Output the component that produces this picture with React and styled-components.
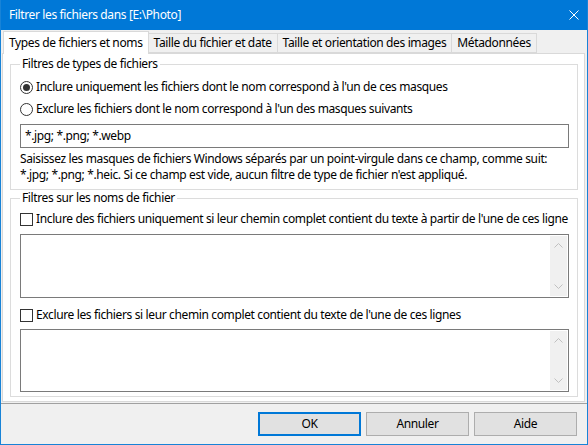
import styled, { createGlobalStyle } from 'styled-components';

const GlobalStyle = createGlobalStyle`
  html, body {
    margin: 0;
    padding: 0;
    background: #f0f0f0;
  }
  body {
    font-family: "Noto Sans", "Liberation Sans", sans-serif;
    font-size: 12px;
    letter-spacing: -0.37px;
    color: #000;
  }
`;

const Window = styled.div`
  width: 588px;
  height: 445px;
  box-sizing: border-box;
  border: 1px solid #1883d7;
  border-top: none;
  background: #f0f0f0;
  display: flex;
  flex-direction: column;
  overflow: hidden;
`;

const TitleBar = styled.div`
  height: 30px;
  flex: none;
  background: #0078d7;
  color: #fff;
  display: flex;
  align-items: center;
  justify-content: space-between;
  padding: 0 8px 0 8px;
  box-sizing: border-box;
  line-height: 16px;
`;

const CloseIcon = () => (
  <svg width="10" height="10" viewBox="0 0 10 10">
    <path d="M0.5 0.5 L9.5 9.5 M9.5 0.5 L0.5 9.5" stroke="#fff" strokeWidth="1" fill="none" />
  </svg>
);

const Body = styled.div`
  display: flex;
  flex-direction: column;
  padding: 0 2px 0 1px;
`;

const TabStrip = styled.div`
  display: flex;
  align-items: flex-end;
  height: 23px;
  padding-left: 1px;
  position: relative;
  z-index: 1;
`;

const Tab = styled.div`
  box-sizing: border-box;
  height: ${p => (p.$active ? '23px' : '20px')};
  padding: 0 5px;
  margin-bottom: ${p => (p.$active ? '-1px' : '0')};
  margin-left: ${p => (p.$first ? '0' : '-1px')};
  border: 1px solid #d9d9d9;
  border-bottom: ${p => (p.$active ? 'none' : '1px solid #d9d9d9')};
  background: ${p => (p.$active ? '#fff' : '#f0f0f0')};
  display: flex;
  align-items: center;
  white-space: nowrap;
  line-height: 16px;
`;

const TabPage = styled.div`
  height: 349px;
  box-sizing: border-box;
  background: #fff;
  border: 1px solid #d9d9d9;
  padding: 2px 6px 0 7px;
  display: flex;
  flex-direction: column;
`;

const Group = styled.fieldset`
  margin: 0;
  min-width: 0;
  border: 1px solid #dcdcdc;
  padding: ${p => p.$pad};
  display: flex;
  flex-direction: column;
`;

const Legend = styled.legend`
  padding: 0 2px;
  margin-left: 0;
  line-height: 16px;
  height: 16px;
`;

const OptionRow = styled.label`
  display: flex;
  align-items: center;
  gap: 3px;
  height: 16px;
  line-height: 16px;
  white-space: nowrap;
  overflow: hidden;
  margin-top: ${p => p.$mt || '0'};
`;

const Radio = styled.span`
  box-sizing: border-box;
  width: 13px;
  height: 13px;
  border-radius: 50%;
  border: 1px solid #333;
  background: #fff;
  display: flex;
  align-items: center;
  justify-content: center;
  flex: none;
  &::after {
    content: '';
    width: 7px;
    height: 7px;
    border-radius: 50%;
    background: ${p => (p.$checked ? '#333' : 'transparent')};
  }
`;

const Checkbox = styled.span`
  box-sizing: border-box;
  width: 13px;
  height: 13px;
  border: 1px solid #333;
  background: #fff;
  flex: none;
`;

const TextInput = styled.div`
  box-sizing: border-box;
  height: 24px;
  margin-top: 7px;
  border: 1px solid #7a7a7a;
  background: #fff;
  padding: 0 4px;
  display: flex;
  align-items: center;
  line-height: 16px;
`;

const Help = styled.div`
  margin-top: 3px;
  line-height: 16px;
  white-space: nowrap;
`;

const TextArea = styled.div`
  box-sizing: border-box;
  height: ${p => p.$h};
  margin-top: ${p => p.$mt};
  border: 1px solid #7a7a7a;
  background: #fff;
  padding: 1px;
  display: flex;
  justify-content: flex-end;
`;

const ScrollBar = styled.div`
  width: 17px;
  background: #f0f0f0;
  display: flex;
  flex-direction: column;
  justify-content: space-between;
  align-items: center;
  padding: 6px 0;
`;

const Chevron = ({ down }) => (
  <svg width="9" height="6" viewBox="0 0 9 6">
    <path
      d={down ? 'M0.5 0.5 L4.5 4.5 L8.5 0.5' : 'M0.5 5.5 L4.5 1.5 L8.5 5.5'}
      stroke="#c0c0c0"
      strokeWidth="1"
      fill="none"
    />
  </svg>
);

const Footer = styled.div`
  flex: 1;
  margin-top: 1px;
  border-top: 1px solid #a0a0a0;
  display: flex;
  justify-content: flex-end;
  align-items: flex-start;
  gap: 5px;
  padding: 8px 10px 0 0;
`;

const Button = styled.div`
  box-sizing: border-box;
  width: 103px;
  height: 24px;
  background: #e1e1e1;
  border: ${p => (p.$default ? '2px solid #0078d7' : '1px solid #adadad')};
  display: flex;
  align-items: center;
  justify-content: center;
  line-height: 16px;
`;

const tabs = [
  'Types de fichiers et noms',
  'Taille du fichier et date',
  'Taille et orientation des images',
  'Métadonnées',
];

export default function App() {
  return (
    <>
      <GlobalStyle />
      <Window>
        <TitleBar>
          <span>{'Filtrer les fichiers dans [E:\\Photo]'}</span>
          <CloseIcon />
        </TitleBar>
        <Body>
          <TabStrip>
            {tabs.map((t, i) => (
              <Tab key={t} $active={i === 0} $first={i === 0}>{t}</Tab>
            ))}
          </TabStrip>
          <TabPage>
            <Group $pad="7px 8px 6px 9px">
              <Legend>Filtres de types de fichiers</Legend>
              <OptionRow>
                <Radio $checked />
                Inclure uniquement les fichiers dont le nom correspond à l'un de ces masques
              </OptionRow>
              <OptionRow $mt="6px">
                <Radio />
                Exclure les fichiers dont le nom correspond à l'un des masques suivants
              </OptionRow>
              <TextInput>*.jpg; *.png; *.webp</TextInput>
              <Help>
                Saisissez les masques de fichiers Windows séparés par un point-virgule dans ce champ, comme suit:
                <br />
                *.jpg; *.png; *.heic. Si ce champ est vide, aucun filtre de type de fichier n'est appliqué.
              </Help>
            </Group>
            <Group $pad="5px 8px 4px 9px">
              <Legend>Filtres sur les noms de fichier</Legend>
              <OptionRow>
                <Checkbox />
                Inclure des fichiers uniquement si leur chemin complet contient du texte à partir de l'une de ces ligne
              </OptionRow>
              <TextArea $h="64px" $mt="7px">
                <ScrollBar>
                  <Chevron />
                  <Chevron down />
                </ScrollBar>
              </TextArea>
              <OptionRow $mt="9px">
                <Checkbox />
                Exclure les fichiers si leur chemin complet contient du texte de l'une de ces lignes
              </OptionRow>
              <TextArea $h="63px" $mt="6px">
                <ScrollBar>
                  <Chevron />
                  <Chevron down />
                </ScrollBar>
              </TextArea>
            </Group>
          </TabPage>
        </Body>
        <Footer>
          <Button $default>OK</Button>
          <Button>Annuler</Button>
          <Button>Aide</Button>
        </Footer>
      </Window>
    </>
  );
}
